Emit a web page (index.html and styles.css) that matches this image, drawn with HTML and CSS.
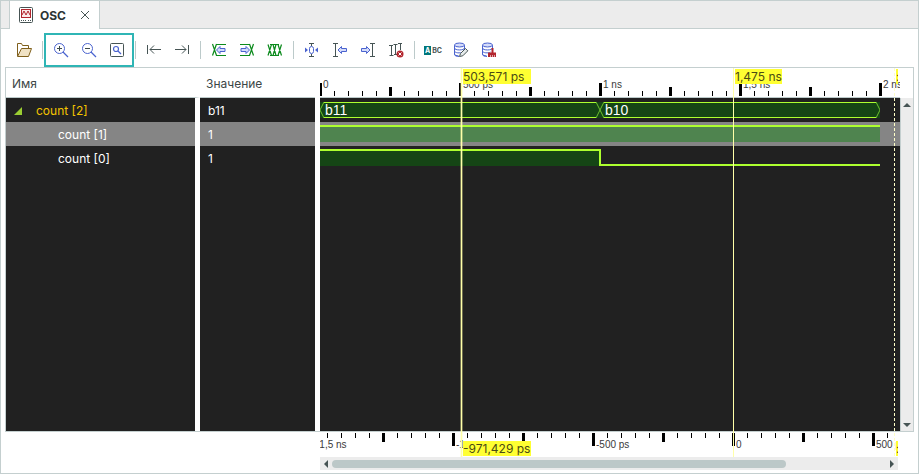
FILE: index.html
```html
<!DOCTYPE html>
<html lang="ru">

<head>
  <meta charset="UTF-8">
  <meta name="viewport" content="width=device-width, initial-scale=1.0">
  <title>OSC</title>
  <link rel="stylesheet" href="styles.css">
</head>

<body>
  <nav class="tabs">
    <div class="tab">
      <svg class="tab-icon" width="14" height="16" viewBox="0 0 14 16" fill="none">
        <rect x=".5" y=".5" width="13" height="15" rx="1" stroke="#465454" />
        <rect x="2.5" y="2.5" width="9" height="8" fill="#fbe9e9" stroke="#b3262e" />
        <path d="M3 8l2-4 2 4 2-4 2 4" stroke="#b3262e" />
        <path d="M2 13.5h6M9 13.5h1M11 13.5h1" stroke="#465454" stroke-dasharray="1 1" />
      </svg>
      <span class="tab-title">OSC</span>
      <button class="tab-close" aria-label="Закрыть">
        <svg width="10" height="10" viewBox="0 0 10 10"><path d="M1 1l8 8M9 1l-8 8" stroke="#465454" /></svg>
      </button>
    </div>
  </nav>

  <main class="window">
    <div class="toolbar">
      <button class="tool" aria-label="Открыть">
        <svg width="16" height="16" viewBox="0 0 16 16" fill="none" stroke="#80601c">
          <path d="M1.5 14V1.5h4l1 2h6v4" />
          <path d="M5.5 6.5h10L12.500 14.500H1.500z" fill="#f0e2c4" />
        </svg>
      </button>
      <span class="sep"></span>
      <div class="zoom-group">
        <button class="tool" aria-label="Увеличить">
          <svg width="16" height="16" viewBox="0 0 16 16" fill="none" stroke="#4a63cf">
            <circle cx="6.500" cy="6.500" r="5" /><path d="M10 10l5 5" stroke-width="1.300" />
            <path d="M4 6.500h5M6.500 4v5" stroke="#3c4a4a" />
          </svg>
        </button>
        <button class="tool" aria-label="Уменьшить">
          <svg width="16" height="16" viewBox="0 0 16 16" fill="none" stroke="#4a63cf">
            <circle cx="6.500" cy="6.500" r="5" /><path d="M10 10l5 5" stroke-width="1.300" />
            <path d="M4 6.500h5" stroke="#3c4a4a" />
          </svg>
        </button>
        <button class="tool" aria-label="Показать всё">
          <svg width="16" height="16" viewBox="0 0 16 16" fill="none" stroke="#4a63cf">
            <rect x="1.500" y="1.500" width="13" height="13" rx="1" stroke="#465454" />
            <circle cx="7" cy="7" r="2.500" stroke-width="1.200" /><path d="M9 9l3 3" stroke-width="1.300" />
          </svg>
        </button>
      </div>
      <span class="sep"></span>
      <button class="tool" aria-label="В начало">
        <svg width="16" height="16" viewBox="0 0 16 16" fill="none" stroke="#465454">
          <path d="M1.500 3v9M15 7.500H4M8 3.500l-4 4 4 4" />
        </svg>
      </button>
      <button class="tool" aria-label="В конец">
        <svg width="16" height="16" viewBox="0 0 16 16" fill="none" stroke="#465454">
          <path d="M14.500 3v9M1 7.500h11M8 3.500l4 4-4 4" />
        </svg>
      </button>
      <span class="sep"></span>
      <button class="tool" aria-label="Предыдущий переход">
        <svg width="16" height="16" viewBox="0 0 16 16" fill="none" stroke="#0b8a1c">
          <path d="M1.500 2l4 11.500M5.500 2l-4 11.500M5 2.500h10M5 13.500h10" stroke-width="1.200" />
          <path d="M5.500 8l3.500-3.500v2h5v3H9v2z" fill="#d5dcfa" stroke="#4a63cf" />
        </svg>
      </button>
      <button class="tool" aria-label="Следующий переход">
        <svg width="16" height="16" viewBox="0 0 16 16" fill="none" stroke="#0b8a1c">
          <path d="M14.500 2l-4 11.500M10.500 2l4 11.500M1 2.500h10M1 13.500h10" stroke-width="1.200" />
          <path d="M10.500 8L7 4.500v2H2v3h5v2z" fill="#d5dcfa" stroke="#4a63cf" />
        </svg>
      </button>
      <button class="tool" aria-label="Переходы">
        <svg width="16" height="16" viewBox="0 0 16 16" fill="none" stroke="#0b8a1c">
          <path d="M3 2.500h9M3 13.500h9M1 2.500l3.500 11M4.500 2.500l-3.500 11M6 2.500l3 11M9 2.500l-3 11M11 2.500l3.500 11M14.500 2.500l-3.500 11" stroke-width="1.200" />
        </svg>
      </button>
      <span class="sep"></span>
      <button class="tool" aria-label="Маркер в нуле">
        <svg width="16" height="16" viewBox="0 0 16 16" fill="none" stroke="#465454">
          <path d="M5 1.500h5M7.500 1v3M7.500 12v3M5 14.500h5" />
          <rect x="5.500" y="4.500" width="4" height="7" rx="2" stroke="#4a63cf" />
          <path d="M1 5.500L4 8l-3 2.500zM14 5.500L11 8l3 2.500z" fill="#4a63cf" stroke="none" />
        </svg>
      </button>
      <button class="tool" aria-label="Предыдущий маркер">
        <svg width="16" height="16" viewBox="0 0 16 16" fill="none" stroke="#465454">
          <path d="M1 1.500h5M3.500 1.500v13M1 14.500h5" />
          <path d="M6 8l3.500-3.500v2h5v3h-5v2z" fill="#d5dcfa" stroke="#4a63cf" />
        </svg>
      </button>
      <button class="tool" aria-label="Следующий маркер">
        <svg width="16" height="16" viewBox="0 0 16 16" fill="none" stroke="#465454">
          <path d="M10 1.500h5M12.500 1.500v13M10 14.500h5" />
          <path d="M10 8L6.500 4.500v2h-5v3h5v2z" fill="#d5dcfa" stroke="#4a63cf" />
        </svg>
      </button>
      <button class="tool" aria-label="Удалить маркеры">
        <svg width="16" height="16" viewBox="0 0 16 16" fill="none" stroke="#465454">
          <path d="M1 3.500h4M3.500 3.500v10M1.500 13.500h4M5.500 2.500h4M7.500 2.500v10M6 12.500h3M10 1.500h4M12.500 1.500V8" />
          <circle cx="12" cy="12" r="3.500" fill="#b3262e" stroke="none" />
          <path d="M10.500 10.500l3 3M13.500 10.500l-3 3" stroke="#fff" />
        </svg>
      </button>
      <span class="sep"></span>
      <button class="tool abc" aria-label="Имена"><span class="abc-a">A</span>BC</button>
      <button class="tool" aria-label="Редактировать базу">
        <svg width="16" height="16" viewBox="0 0 16 16" fill="none" stroke="#4a63cf">
          <path d="M1.500 3v9.500c0 1.300 2.500 2 4.500 2M11.500 3v4M1.500 6c0 2.600 10 2.600 10 0M1.500 9c0 2 6 2.500 8 1M1.500 12c0 1.200 2 1.800 4 1.800" />
          <ellipse cx="6.500" cy="3" rx="5" ry="2" fill="#d5dcfa" />
          <path d="M6.500 14.500l1-3 5-5 2.300 2.300-5 5z" fill="#e5eaea" stroke="#465454" />
        </svg>
      </button>
      <button class="tool" aria-label="Очистить базу">
        <svg width="16" height="16" viewBox="0 0 16 16" fill="none" stroke="#4a63cf">
          <path d="M1.500 3v9.500c0 1.300 2.500 2 4.500 2M11.500 3v3M1.500 6c0 2.600 10 2.600 10 0M1.500 9c0 2 6 2.500 8 1M1.500 12c0 1.200 2 1.800 4 1.800" />
          <ellipse cx="6.500" cy="3" rx="5" ry="2" fill="#d5dcfa" />
          <path d="M10.500 6h2v4.500H15V15H7v-4.500h3.500z" fill="#b3262e" stroke="none" />
          <path d="M9.500 15v-2M11.500 15v-2M13.500 15v-2" stroke="#fff" stroke-width=".6" />
        </svg>
      </button>
    </div>

    <section class="viewer">
      <div class="panel">
        <table class="signals">
          <thead>
            <tr>
              <th class="name">Имя</th>
              <th class="value">Значение</th>
            </tr>
          </thead>
          <tbody>
            <tr class="bus">
              <td class="name"><svg class="expander" width="8" height="8" viewBox="0 0 8 8"><path d="M8 0v8H0z" /></svg>count [2]</td>
              <td class="value">b11</td>
            </tr>
            <tr class="bit selected">
              <td class="name">count [1]</td>
              <td class="value">1</td>
            </tr>
            <tr class="bit">
              <td class="name">count [0]</td>
              <td class="value">1</td>
            </tr>
            <tr class="rest">
              <td class="name"></td>
              <td class="value"></td>
            </tr>
          </tbody>
        </table>

        <div class="plot">
          <svg class="ruler" height="29">
            <defs>
              <pattern id="minor" width="14" height="29" patternUnits="userSpaceOnUse">
                <rect y="23" width="1" height="5" />
              </pattern>
              <pattern id="major" x="-1" width="140" height="29" patternUnits="userSpaceOnUse">
                <rect y="15" width="3" height="13" />
                <rect x="70" y="19" width="3" height="9" />
              </pattern>
            </defs>
            <rect width="562" height="29" fill="url(#minor)" />
            <rect width="562" height="29" fill="url(#major)" />
            <text x="3" y="20">0</text>
            <text x="143" y="20">500 ps</text>
            <text x="283" y="20">1 ns</text>
            <text x="423" y="20">1,5 ns</text>
            <text x="563" y="20">2 ns</text>
          </svg>
          <div class="waves">
            <div class="wave">
              <svg width="560" height="24">
                <path class="fill" d="M0 4h560v16H0z" />
                <path class="slope" d="M4 4L0 12l4 8M276 4l8 16M284 4l-8 16M556 4l4 8-4 8" />
                <path class="edge" d="M4 4.500h272M284 4.500h272M4 19.500h272M284 19.500h272" />
                <text x="5" y="17">b11</text>
                <text x="285" y="17">b10</text>
              </svg>
            </div>
            <div class="wave selected">
              <svg width="560" height="24">
                <path class="fill" d="M0 4h560v16H0z" />
                <path class="level" d="M0 4h560" />
              </svg>
            </div>
            <div class="wave">
              <svg width="560" height="24">
                <path class="fill" d="M0 4h280v16H0z" />
                <path class="level" d="M0 4h280v15h280" />
              </svg>
            </div>
          </div>
        </div>

        <div class="vscroll">
          <svg width="8" height="4" viewBox="0 0 8 4"><path d="M4 0l4 4H0z" /></svg>
          <svg width="8" height="4" viewBox="0 0 8 4"><path d="M0 0h8L4 4z" /></svg>
        </div>
      </div>

      <div class="footer">
        <svg class="ruler" height="25">
          <defs>
            <pattern id="minor-low" x="7" width="14" height="25" patternUnits="userSpaceOnUse">
              <rect y="1" width="1" height="5" />
            </pattern>
            <pattern id="major-low" x="-8" width="140" height="25" patternUnits="userSpaceOnUse">
              <rect y="1" width="3" height="13" />
              <rect x="70" y="1" width="3" height="9" />
            </pattern>
          </defs>
          <rect width="100%" height="25" fill="url(#minor-low)" />
          <rect width="100%" height="25" fill="url(#major-low)" />
          <text x="-4" y="16">-1,5 ns</text>
          <text x="136" y="16">-1 ns</text>
          <text x="276" y="16">-500 ps</text>
          <text x="416" y="16">0</text>
          <text x="556" y="16">500 ps</text>
        </svg>
        <div class="hscroll">
          <svg width="4" height="8" viewBox="0 0 4 8"><path d="M4 0v8L0 4z" /></svg>
          <div class="track"><div class="thumb"></div></div>
          <svg width="4" height="8" viewBox="0 0 4 8"><path d="M0 0l4 4-4 4z" /></svg>
        </div>
      </div>

      <div class="markers">
        <div class="marker current"><span class="tag">503,571 ps</span><span class="tag">-971,429 ps</span></div>
        <div class="marker base"><span class="tag">1,475 ns</span></div>
        <div class="marker end"><span class="tag">:</span><span class="tag">:</span></div>
      </div>
    </section>
  </main>
</body>

</html>
```
FILE: styles.css
```css
* {
  box-sizing: border-box;
  margin: 0;
  padding: 0;
}

body {
  display: flex;
  flex-direction: column;
  min-height: 100vh;
  font-family: Inter, "Liberation Sans", sans-serif;
  font-size: 12px;
  color: #3c4646;
  background: #fff;
}

svg {
  display: block;
  flex: none;
}

button {
  border: 0;
  background: none;
  cursor: pointer;
}

.tabs {
  display: flex;
  height: 29px;
  padding-left: 8px;
  background: #ececec;
  border: 1px solid #c4cfcf;
}

.tab {
  display: flex;
  align-items: center;
  height: 28px;
  padding: 0 7px 0 9px;
  background: #fff;
  border: solid #c4cfcf;
  border-width: 0 1px;
}

.tab-title {
  margin: 0 12px 0 7px;
  font-size: 12px;
  font-weight: 700;
  color: #2c3434;
}

.tab-close {
  padding: 0 2px;
}

.window {
  display: flex;
  flex: 1;
  flex-direction: column;
  border: 1px solid #c4cfcf;
  border-top: 0;
}

.toolbar {
  display: flex;
  align-items: center;
  padding: 7px 9px 3px;
}

.tool {
  display: flex;
  align-items: center;
  justify-content: center;
  width: 28px;
  height: 28px;
}

.sep {
  width: 1px;
  height: 18px;
  margin: 0 4px;
  background: #bccaca;
}

.zoom-group {
  position: relative;
  display: flex;
}

.zoom-group::after {
  content: "";
  position: absolute;
  inset: -3px;
  border: 2px solid #2fb5b5;
  pointer-events: none;
}

.abc {
  gap: 1px;
  font-family: Inter, sans-serif;
  font-size: 7px;
  font-weight: 700;
  color: #465454;
}

.abc-a {
  padding: 0 1px;
  color: #fff;
  background: #00767a;
}

.viewer {
  position: relative;
  display: flex;
  flex: 1;
  flex-direction: column;
  margin: 0 4px 3px;
}

.panel {
  display: grid;
  flex: 1;
  grid-template-columns: 314px 1fr 13px;
  border: 1px solid #c4cfcf;
}

.signals {
  width: 309px;
  height: 100%;
  border-spacing: 0;
  border-collapse: separate;
  table-layout: fixed;
  color: #fff;
}

.signals th {
  height: 30px;
  padding: 2px 6px 0;
  border-bottom: 1px solid #bccaca;
  font-size: 12px;
  font-weight: 400;
  text-align: left;
  color: #3c4646;
}

.signals td {
  height: 24px;
  padding: 0 8px;
  font-size: 12px;
  background: #212121;
}

.signals .name {
  width: 194px;
  border-right: 5px solid #fff;
}

.signals .rest td {
  height: auto;
}

.signals .selected td {
  background: #858585;
}

.bus .name {
  color: #f5c400;
}

.bit .name {
  padding-left: 52px;
}

.expander {
  display: inline-block;
  margin-right: 14px;
  fill: #9acd32;
}

.plot {
  display: flex;
  flex-direction: column;
  min-width: 0;
  overflow: hidden;
}

.ruler {
  width: 100%;
  overflow: hidden;
}

.ruler text {
  font-family: "Liberation Sans", sans-serif;
  font-size: 10px;
  fill: #3a3a3a;
}

.waves {
  flex: 1;
  border-top: 1px solid #bccaca;
  background: #212121;
}

.wave {
  height: 24px;
}

.wave.selected {
  background: #858585;
}

.wave .fill {
  fill: #154515;
}

.wave.selected .fill {
  fill: #4f844f;
}

.wave .edge,
.wave .level,
.wave .slope {
  fill: none;
  stroke: #adff2f;
}

.wave .level {
  stroke-width: 2px;
}

.wave .slope {
  stroke: #6cc02c;
}

.wave text {
  font-family: "Liberation Sans", sans-serif;
  font-size: 14px;
  fill: #fff;
}

.vscroll {
  display: flex;
  flex-direction: column;
  align-items: center;
  justify-content: space-between;
  margin-top: 30px;
  padding: 5px 0 4px;
  background: #ececec;
  border-left: 1px solid #c4cfcf;
  fill: #465454;
}

.footer {
  margin: 0 16px 0 315px;
}

.hscroll {
  display: flex;
  align-items: center;
  height: 13px;
  padding: 0 4px;
  gap: 4px;
  background: #ececec;
  fill: #465454;
}

.track {
  flex: 1;
}

.thumb {
  width: 82%;
  height: 8px;
  border-radius: 4px;
  background: #bcc8c8;
}

.markers {
  position: absolute;
  top: 1px;
  right: 16px;
  bottom: 13px;
  left: 315px;
  overflow: hidden;
  pointer-events: none;
}

.marker {
  position: absolute;
  top: 0;
  bottom: 0;
  width: 1px;
  background: #ffffa8;
}

.current {
  left: 141px;
  box-shadow: 0 0 0 1px rgba(255, 255, 168, .35);
}

.base {
  left: 413px;
}

.end {
  left: 574px;
  background: repeating-linear-gradient(#ffffc8 0 3px, transparent 3px 5px);
}

.tag {
  position: absolute;
  top: 1px;
  left: 2px;
  height: 15px;
  font-size: 12px;
  line-height: 15px;
  white-space: nowrap;
  color: #4a4a14;
  background: #ffff32;
}

.current .tag {
  min-width: 68px;
}

.tag + .tag {
  top: auto;
  bottom: 1px;
}
```
